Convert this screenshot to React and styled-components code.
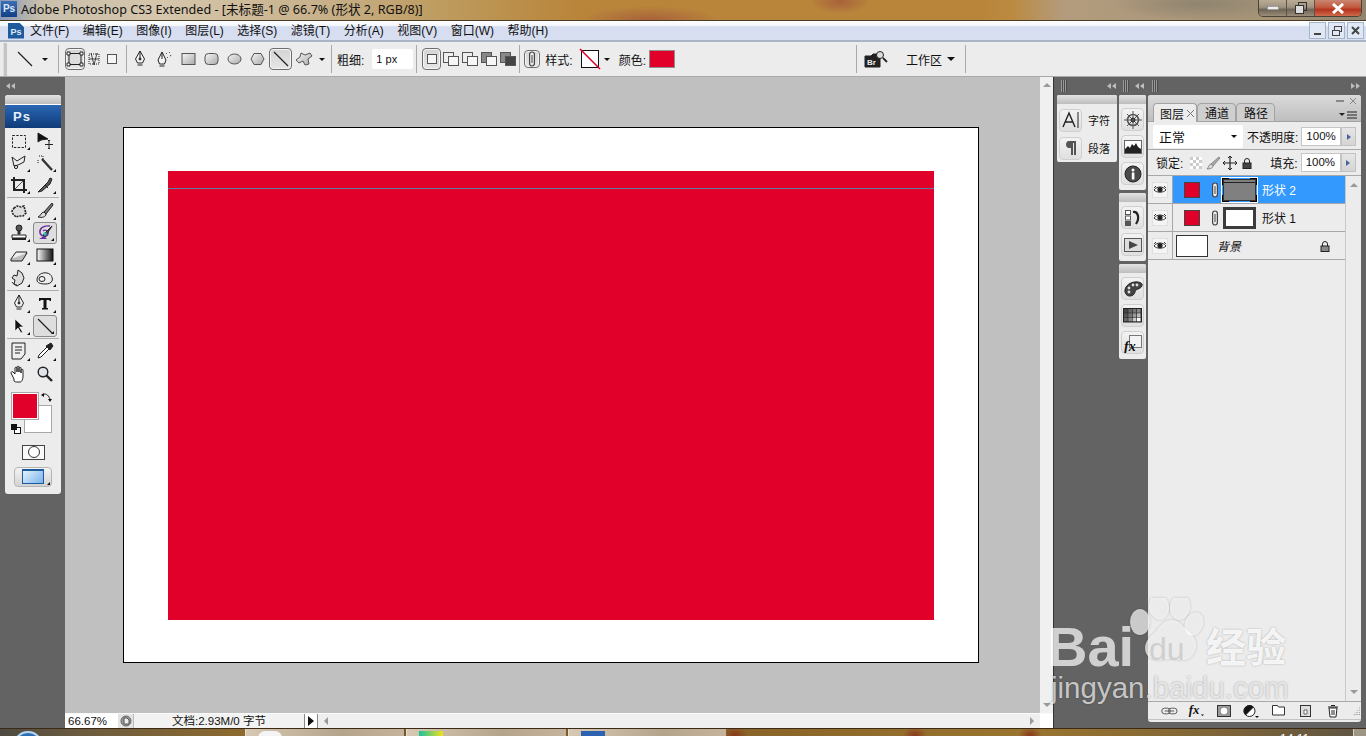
import React from 'react'
import styled, { createGlobalStyle } from 'styled-components'

const uiFont = `"Liberation Sans", "Noto Sans CJK SC", sans-serif`

const GlobalStyle = createGlobalStyle`
  html, body { margin: 0; padding: 0; background: #636363; overflow: hidden; }
  * { box-sizing: border-box; }
`

const Window = styled.div`
  position: relative;
  display: flex;
  flex-direction: column;
  width: 1366px;
  height: 736px;
  overflow: hidden;
  font-family: ${uiFont};
  font-size: 12px;
  color: #111;
`

/* title bar */
const TitleBar = styled.div`
  display: flex;
  align-items: flex-start;
  height: 21px;
  flex: none;
  border-bottom: 1px solid #4a3a26;
  background:
    radial-gradient(ellipse 70px 14px at 650px 20px, #a8623a 0%, transparent 100%),
    radial-gradient(ellipse 30px 12px at 840px 2px, #a8623a 0%, transparent 100%),
    radial-gradient(ellipse 90px 16px at 1200px 4px, #8f8470 0%, transparent 100%),
    linear-gradient(90deg, #8a99b4 0%, #c9c0ac 3%, #d6c6ac 12%, #c7b089 24%, #bd9a5c 33%, #b9853b 42%, #b9853b 72%, #bb8a40 74%, #b39c7e 78%, #a69478 92%, #8f8570 100%);
`

const TitleLogo = styled.div`
  width: 16px;
  height: 16px;
  margin: 1px 0 0 1px;
  background: linear-gradient(#3c6fb8, #123f86);
  color: #dce8fa;
  font: bold 10px/16px "Liberation Sans", sans-serif;
  text-align: center;
`

const TitleText = styled.div`
  margin: 1px 0 0 4px;
  font: 12.6px/18px "Noto Sans", "Noto Sans CJK SC", sans-serif;
  color: #111;
  white-space: nowrap;
`

const WinControls = styled.div`
  display: flex;
  margin-left: auto;
  margin-right: 4px;
  height: 17px;
  border: 1px solid #4d4335;
  border-top: none;
  border-radius: 0 0 5px 5px;
  overflow: hidden;
`

const WinBtn = styled.div`
  display: flex;
  align-items: center;
  justify-content: center;
  width: ${p => p.$w}px;
  height: 100%;
  border-right: 1px solid #5d5345;
  background: ${p => p.$close
    ? 'linear-gradient(#c98672 0%, #c25a3f 45%, #b5341d 60%, #cf6a4c 100%)'
    : 'linear-gradient(#b9ab94 0%, #a09281 45%, #6f6455 60%, #9a8c78 100%)'};
  &:last-child { border-right: none; }
`

/* menu bar */
const MenuBar = styled.div`
  display: flex;
  align-items: center;
  height: 21px;
  flex: none;
  padding-left: 8px;
  border-bottom: 2px solid #a9b4c4;
  background: linear-gradient(#ffffff 0%, #f2f5fb 25%, #d6ddf0 30%, #d8dff1 100%);
`

const MenuLogo = styled.div`
  width: 16px;
  height: 16px;
  margin-right: 6px;
  background: #1f5a9c;
  color: #dfe9f8;
  font: bold 9px/18px "Liberation Sans", sans-serif;
  text-align: center;
  clip-path: polygon(0 0, 70% 0, 100% 30%, 100% 100%, 0 100%);
`

const MenuItems = styled.div`
  display: flex;
  gap: 13.5px;
`

const MenuItem = styled.span`
  font-size: 12px;
  line-height: 16px;
  white-space: nowrap;
`

const DocControls = styled.div`
  display: flex;
  gap: 2px;
  margin: 0 2px 0 auto;
`

const DocBtn = styled.div`
  display: flex;
  align-items: center;
  justify-content: center;
  width: 17px;
  height: 17px;
  border: 1px solid #a6b6c9;
  background: #dfe8f4;
`

/* options bar */
const OptionsBar = styled.div`
  display: flex;
  align-items: center;
  height: 35px;
  flex: none;
  background: #ececec;
  border-bottom: 1px solid #a8a8a8;
`

const Grip = styled.div`
  width: 4px;
  height: 33px;
  margin: 0 6px 0 3px;
  background: #c4c4c4;
  border-left: 1px solid #dedede;
`

const Sep = styled.div`
  width: 1px;
  height: 28px;
  flex: none;
  margin: 0 ${p => p.$r ?? 4}px 0 ${p => p.$l ?? 4}px;
  background: #a9a9a9;
`

const Slot = styled.div`
  display: flex;
  align-items: center;
  justify-content: center;
  flex: none;
  width: ${p => p.$w}px;
  height: ${p => p.$h ?? 22}px;
  margin-left: ${p => p.$ml ?? 0}px;
  ${p => p.$on && `
    border: 1px solid #6e6e6e;
    border-radius: 4px;
    background: linear-gradient(#d4d4d4, #e6e6e6);
    box-shadow: inset 0 0 0 1px #f4f4f4;
  `}
`

const Caret = styled.div`
  flex: none;
  width: 0;
  height: 0;
  margin-left: ${p => p.$ml ?? 0}px;
  border-left: ${p => p.$s ?? 3}px solid transparent;
  border-right: ${p => p.$s ?? 3}px solid transparent;
  border-top: ${p => p.$s ?? 3}px solid #111;
`

const OptLabel = styled.span`
  flex: none;
  margin-left: ${p => p.$ml ?? 0}px;
  font-size: 12px;
  white-space: nowrap;
`

const PxInput = styled.div`
  flex: none;
  width: 41px;
  height: 20px;
  margin-left: 8px;
  padding-left: 4px;
  background: #fff;
  border-radius: 2px;
  font: 11px/20px "Liberation Sans", sans-serif;
`

const ColorChip = styled.div`
  flex: none;
  width: 26px;
  height: 18px;
  margin-left: 3px;
  background: #e1002a;
  border: 1px solid #8f8f8f;
`

/* workspace */
const Workspace = styled.div`
  display: flex;
  flex: 1;
  min-height: 0;
`

const ToolDock = styled.div`
  flex: none;
  width: 65px;
  padding-left: 5px;
  background: #636363;
`

const DockHead = styled.div`
  display: flex;
  align-items: center;
  height: 18px;
  padding-left: 1px;
`

const ToolPanel = styled.div`
  width: 56px;
  height: 399px;
  background: #ececec;
  border-radius: 3px;
  overflow: hidden;
`

const PanelCap = styled.div`
  flex: none;
  align-self: stretch;
  height: 9px;
  background: linear-gradient(#e3e3e3, #bdbdbd);
`

const PsBadge = styled.div`
  height: 24px;
  padding-left: 8px;
  border-top: 1px solid #fff;
  background: linear-gradient(#2a66b4, #0f3b78);
  color: #e8f0fb;
  font: bold 13px/23px "Liberation Sans", sans-serif;
  letter-spacing: 1px;
`

const ToolGrid = styled.div`
  display: grid;
  grid-template-columns: 26px 26px;
  grid-auto-rows: 22.25px;
  padding: 1.5px 0 0 1px;
`

const Tool = styled.div`
  position: relative;
  display: flex;
  align-items: center;
  justify-content: center;
  ${p => p.$on && `
    margin: 0 1px;
    border: 1px solid #8a8a8a;
    border-radius: 3px;
    background: #dedede;
  `}
  ${p => p.$more && `
    &::after {
      content: '';
      position: absolute;
      right: 2px;
      bottom: 2px;
      border-left: 3px solid transparent;
      border-bottom: 3px solid #111;
    }
  `}
`

const ToolDivider = styled.div`
  height: 1px;
  margin: 1px 2px 0;
  background: #adadad;
`

const ColorWell = styled.div`
  position: relative;
  height: 56px;
  margin: 8px 0 0 7px;
`

const FgSwatch = styled.div`
  position: absolute;
  left: 0;
  top: 0;
  z-index: 1;
  width: 26px;
  height: 26px;
  background: #e1002a;
  border: 1px solid #fff;
  outline: 1px solid #a8a8a8;
`

const BgSwatch = styled.div`
  position: absolute;
  left: 12px;
  top: 12px;
  width: 28px;
  height: 28px;
  background: #fff;
  border: 1px solid #a8a8a8;
`

const WellIcon = styled.div`
  position: absolute;
  left: ${p => p.$x}px;
  top: ${p => p.$y}px;
  line-height: 0;
`

const MaskBtn = styled.div`
  display: flex;
  align-items: center;
  justify-content: center;
  width: 23px;
  height: 15px;
  margin: -4px 0 0 17px;
  background: #fafafa;
  border: 1px solid #444;
`

const ScreenBtn = styled.div`
  position: relative;
  display: flex;
  align-items: center;
  justify-content: center;
  width: 38px;
  height: 20px;
  margin: 7px 0 0 9px;
  border: 1px solid #b5b5b5;
  border-radius: 4px;
  background: linear-gradient(#f4f4f4, #d2d2d2);
  &::after {
    content: '';
    position: absolute;
    right: 1px;
    bottom: 1px;
    border-left: 3px solid transparent;
    border-bottom: 3px solid #111;
  }
`

const ScreenIcon = styled.div`
  width: 22px;
  height: 15px;
  border: 1px solid #1c5a9e;
  border-top-width: 2px;
  background: linear-gradient(135deg, #e4f1fd, #79b3ea);
`

/* canvas */
const CanvasColumn = styled.div`
  display: flex;
  flex-direction: column;
  flex: none;
  width: 988px;
`

const CanvasRow = styled.div`
  display: flex;
  flex: 1;
  min-height: 0;
`

const Canvas = styled.div`
  flex: 1;
  padding: 50px 0 0 58px;
  background: #c0c0c0;
`

const Doc = styled.div`
  width: 856px;
  height: 536px;
  padding: 43px 44px;
  background: #fff;
  border: 1px solid #000;
`

const RedShape = styled.div`
  height: 449px;
  padding-top: 17px;
  background: #e1002a;
`

const PathLine = styled.div`
  height: 1px;
  background: #5a7ba5;
`

const VScroll = styled.div`
  display: flex;
  flex-direction: column;
  align-items: center;
  justify-content: space-between;
  flex: none;
  width: 13px;
  padding: 6px 0;
  background: #f0f0f0;
`

const ScrollArrow = styled.div`
  width: 0;
  height: 0;
  border-left: 4px solid transparent;
  border-right: 4px solid transparent;
  ${p => p.$up ? 'border-bottom: 4px solid #9a9a9a;' : 'border-top: 4px solid #9a9a9a;'}
`

const StatusBar = styled.div`
  display: flex;
  align-items: stretch;
  flex: none;
  height: 15px;
  background: #efefef;
  border-top: 1px solid #fafafa;
`

const Zoom = styled.div`
  width: 53px;
  padding-left: 3px;
  background: #fff;
  font: 11.5px/15px "Liberation Sans", sans-serif;
`

const StatusIcon = styled.div`
  display: flex;
  align-items: center;
  justify-content: center;
  width: 16px;
  background: #e4e4e4;
  border-right: 1px solid #bbb;
`

const DocInfo = styled.div`
  width: 170px;
  text-align: center;
  font-size: 11.5px;
  line-height: 15px;
  background: #f2f2f2;
`

const StatusArrow = styled.div`
  display: flex;
  align-items: center;
  justify-content: center;
  width: 14px;
  background: #fff;
  border-left: 1px solid #888;
  border-right: 1px solid #888;
  &::before {
    content: '';
    border-top: 5px solid transparent;
    border-bottom: 5px solid transparent;
    border-left: 6px solid #111;
  }
`

const HScroll = styled.div`
  display: flex;
  align-items: center;
  justify-content: space-between;
  flex: 1;
  padding: 0 6px;
`

const HArrow = styled.div`
  width: 0;
  height: 0;
  border-top: 4px solid transparent;
  border-bottom: 4px solid transparent;
  ${p => p.$left ? 'border-right: 4px solid #9a9a9a;' : 'border-left: 4px solid #9a9a9a;'}
`

const Corner = styled.div`
  width: 13px;
  background: #fff;
`

/* right dock */
const RightDock = styled.div`
  flex: 1;
  display: flex;
  flex-direction: column;
  background: #636363;
  border-left: 1px solid #333;
`

const RightHead = styled.div`
  display: flex;
  align-items: center;
  height: 18px;
  flex: none;
  padding-left: 4px;
`

const GripLines = styled.div`
  flex: none;
  width: 6px;
  height: 12px;
  margin-left: ${p => p.$ml ?? 0}px;
  background: repeating-linear-gradient(90deg, #999 0 1px, #4c4c4c 1px 2px);
`

const Rewind = styled.div`
  display: flex;
  margin-left: ${p => p.$ml ?? 0}px;
  flex: none;
  &::before, &::after {
    content: '';
    border-top: 3.5px solid transparent;
    border-bottom: 3.5px solid transparent;
    ${p => p.$right ? 'border-left: 4px solid #bdbdbd;' : 'border-right: 4px solid #bdbdbd;'}
    margin-right: 1px;
  }
`

const RightBody = styled.div`
  display: flex;
  flex: 1;
  min-height: 0;
  padding: 0 5px 6px 3px;
`

const CharPanel = styled.div`
  flex: none;
  width: 60px;
  height: 67px;
  background: #ececec;
  border-radius: 2px;
  overflow: hidden;
`

const CharRows = styled.div`
  padding-top: 2px;
`

const CharRow = styled.div`
  display: flex;
  align-items: center;
  gap: 6px;
  height: 28px;
  padding-left: 2px;
  font-size: 11px;
`

const IconButton = styled.div`
  display: flex;
  align-items: center;
  justify-content: center;
  flex: none;
  width: 23px;
  height: 23px;
  border: 1px solid #cfcfcf;
  border-radius: 4px;
  background: linear-gradient(#f3f3f3, #dfdfdf);
`

const IconCol = styled.div`
  display: flex;
  flex-direction: column;
  gap: 3px;
  flex: none;
  width: 27px;
  margin-left: 2px;
`

const IconGroup = styled.div`
  display: flex;
  flex-direction: column;
  align-items: center;
  gap: 4px;
  padding-bottom: 5px;
  background: #ececec;
  border-radius: 2px;
  overflow: hidden;
`

const LayersPanel = styled.div`
  display: flex;
  flex-direction: column;
  flex: none;
  width: 213px;
  height: 627px;
  margin-left: 2px;
  background: #ececec;
  border-radius: 3px;
  overflow: hidden;
`

const TabStrip = styled.div`
  position: relative;
  display: flex;
  align-items: flex-end;
  height: 27px;
  flex: none;
  padding-left: 5px;
  background: linear-gradient(#dadada, #bebebe);
  border-bottom: 1px solid #a3a3a3;
`

const Tab = styled.div`
  display: flex;
  align-items: center;
  gap: 3px;
  height: 19px;
  margin-bottom: -1px;
  padding: 0 ${p => p.$on ? 2 : 6}px 0 ${p => p.$on ? 6 : 7}px;
  border: 1px solid #a3a3a3;
  border-bottom: ${p => p.$on ? 'none' : '1px solid #a3a3a3'};
  border-radius: 4px 4px 0 0;
  background: ${p => p.$on ? '#ececec' : '#cfcfcf'};
  font-size: 12px;
`

const PanelMenu = styled.div`
  position: absolute;
  right: 2px;
  bottom: 1px;
  line-height: 0;
`

const PanelWinBtns = styled.div`
  position: absolute;
  right: 4px;
  top: 2px;
  display: flex;
  gap: 5px;
  align-items: center;
  line-height: 0;
`

const BlendRow = styled.div`
  display: flex;
  align-items: center;
  height: 28px;
  flex: none;
  padding: 2px 0 0 5px;
  border-bottom: 1px solid #a8a8a8;
`

const BlendSelect = styled.div`
  display: flex;
  align-items: center;
  justify-content: space-between;
  flex: none;
  width: 90px;
  height: 23px;
  padding: 0 6px;
  background: #fff;
  border-radius: 2px;
  font-size: 13px;
`

const PctInput = styled.div`
  flex: none;
  width: 40px;
  height: 19px;
  margin-left: 3px;
  padding-left: 4px;
  background: #fff;
  border: 1px solid #c6c6c6;
  font: 11.5px/17px "Liberation Sans", sans-serif;
`

const StepBtn = styled.div`
  display: flex;
  align-items: center;
  justify-content: center;
  flex: none;
  width: 15px;
  height: 19px;
  background: linear-gradient(#e6e6e6, #d4d4d4);
  border: 1px solid #c2c2c2;
  &::before {
    content: '';
    border-top: 3px solid transparent;
    border-bottom: 3px solid transparent;
    border-left: 4px solid #46659a;
  }
`

const LockRow = styled.div`
  display: flex;
  align-items: center;
  height: 26px;
  flex: none;
  padding-left: 8px;
  border-bottom: 1px solid #a8a8a8;
`

const LockIcon = styled.div`
  display: flex;
  justify-content: center;
  flex: none;
  width: 17px;
  margin-left: ${p => p.$ml ?? 0}px;
  line-height: 0;
`

const ListArea = styled.div`
  display: flex;
  flex: 1;
  min-height: 0;
`

const LayerList = styled.div`
  flex: 1;
  border-right: 1px solid #c8c8c8;
`

const LayerRow = styled.div`
  display: flex;
  align-items: stretch;
  height: 28px;
  border-bottom: 1px solid #a8a8a8;
`

const EyeCell = styled.div`
  display: flex;
  align-items: center;
  justify-content: center;
  flex: none;
  width: 25px;
  border-right: 1px solid #a8a8a8;
`

const LayerBody = styled.div`
  display: flex;
  align-items: center;
  flex: 1;
  padding-left: ${p => p.$pl ?? 11}px;
  background: ${p => p.$on ? '#3399ff' : 'transparent'};
  color: ${p => p.$on ? '#fff' : '#111'};
`

const ColorThumb = styled.div`
  flex: none;
  width: 16px;
  height: 16px;
  background: #e1002a;
  border: 1px solid #444;
`

const LinkSlot = styled.div`
  display: flex;
  justify-content: center;
  flex: none;
  width: 9px;
  margin-left: 10px;
  line-height: 0;
`

const ShapeThumb = styled.div`
  position: relative;
  flex: none;
  width: 33px;
  height: 22px;
  margin-left: 4px;
  background: ${p => p.$grey ? '#808080' : '#fff'};
  border: ${p => p.$grey ? '1px solid #333' : '3px solid #3c3c3c'};
  &::before {
    content: '';
    display: ${p => p.$grey ? 'block' : 'none'};
    height: 1px;
    margin-top: 2px;
    background: #222;
  }
  ${p => p.$grey && `
    &::after {
      content: '';
      position: absolute;
      inset: -3px;
      border: 1px solid #fff;
      background:
        linear-gradient(#000, #000) 0 0 / 7px 1px no-repeat,
        linear-gradient(#000, #000) 0 0 / 1px 7px no-repeat,
        linear-gradient(#000, #000) 100% 0 / 7px 1px no-repeat,
        linear-gradient(#000, #000) 100% 0 / 1px 7px no-repeat,
        linear-gradient(#000, #000) 0 100% / 7px 1px no-repeat,
        linear-gradient(#000, #000) 0 100% / 1px 7px no-repeat,
        linear-gradient(#000, #000) 100% 100% / 7px 1px no-repeat,
        linear-gradient(#000, #000) 100% 100% / 1px 7px no-repeat;
    }
  `}
`

const BackThumb = styled.div`
  flex: none;
  width: 32px;
  height: 22px;
  background: #fff;
  border: 1px solid #333;
`

const LayerName = styled.span`
  margin-left: ${p => p.$ml ?? 6}px;
  font-size: 12px;
  font-style: ${p => p.$italic ? 'italic' : 'normal'};
`

const LayerLock = styled.div`
  margin: 0 14px 0 auto;
  line-height: 0;
`

const ListScroll = styled.div`
  display: flex;
  flex-direction: column;
  align-items: center;
  justify-content: space-between;
  flex: none;
  width: 15px;
  padding: 7px 0;
`

const PanelFooter = styled.div`
  display: flex;
  align-items: center;
  height: 18px;
  flex: none;
  border-top: 1px solid #a8a8a8;
  padding-left: 13px;
`

const FootIcon = styled.div`
  display: flex;
  justify-content: center;
  flex: none;
  width: 17px;
  margin-right: 10.3px;
  line-height: 0;
`

const PanelBase = styled.div`
  height: 3px;
  flex: none;
  border-top: 1px solid #c4c4c4;
`

/* task bar */
const TaskBar = styled.div`
  position: relative;
  display: flex;
  height: 8px;
  flex: none;
  overflow: hidden;
  padding-left: 245px;
  gap: 2px;
  border-top: 1px solid #3d2a16;
  background:
    radial-gradient(ellipse 12px 8px at 735px 6px, #8a3a1c, transparent),
    radial-gradient(ellipse 12px 8px at 915px 6px, #8a3a1c, transparent),
    radial-gradient(ellipse 12px 8px at 1030px 6px, #8a3a1c, transparent),
    linear-gradient(90deg, #4d4a42 0, #6c5b3f 6%, #8d6a2e 18%, #75552c 30%, #8a6428 55%, #9a7530 75%, #7c6338 90%, #5c5444 100%);
`

const Orb = styled.div`
  position: absolute;
  left: 13px;
  top: 2px;
  width: 30px;
  height: 30px;
  border-radius: 50%;
  border: 2px solid #b8d5ef;
  background: #2c6fb5;
`

const TaskButton = styled.div`
  display: flex;
  width: ${p => p.$w}px;
  height: 7px;
  padding-left: 12px;
  background: linear-gradient(90deg, #d6c8b2, #b5a48c 60%, #c5b49b);
  border-left: 1px solid #e6ddcd;
`

const TaskGlyph = styled.div`
  width: 24px;
  height: 7px;
  margin-top: 2px;
  background: ${p => p.$c};
  border-radius: ${p => p.$round ? '12px 12px 0 0' : '0'};
`

const Clock = styled.div`
  position: absolute;
  left: 1280px;
  top: 3px;
  color: #fff;
  font: 12px/14px "Liberation Sans", sans-serif;
`

const TrayEnd = styled.div`
  position: absolute;
  right: 0;
  top: 0;
  width: 13px;
  height: 8px;
  background: #9d9586;
  border-left: 1px solid #d8d2c4;
`

/* baidu watermark, lies over the panels */
const Watermark = styled.div`
  position: absolute;
  left: 1050px;
  top: 598px;
  width: 250px;
  height: 110px;
  color: rgba(255, 255, 255, 0.7);
  pointer-events: none;
`

const WmBai = styled.div`
  position: absolute;
  left: -3px;
  top: 14px;
  font: bold 56px/70px "Liberation Sans", sans-serif;
`

const WmPaw = styled.svg`
  position: absolute;
  left: 78px;
  top: 0;
  filter: drop-shadow(0 0 1px rgba(0, 0, 0, 0.3));
`

const WmDu = styled.div`
  position: absolute;
  left: 99px;
  top: 33px;
  color: #cfcfcf;
  font: 32px/36px "Liberation Sans", sans-serif;
`

const WmJing = styled.div`
  position: absolute;
  left: 156px;
  top: 22px;
  color: rgba(255, 255, 255, 0.9);
  font: bold 40px/50px "Noto Sans CJK SC", sans-serif;
  text-shadow: 0 0 2px rgba(0, 0, 0, 0.3);
  white-space: nowrap;
`

const WmUrl = styled.div`
  position: absolute;
  left: 1px;
  top: 71px;
  font: 29.5px/38px "Liberation Sans", sans-serif;
  text-shadow: 0 0 2px rgba(0, 0, 0, 0.35);
  white-space: nowrap;
`

const HiddenSvg = styled.svg`
  position: absolute;
`

/* drawings */
const S = ({ w = 16, h = 16, v, children }) => (
  <svg width={w} height={h} viewBox={v || `0 0 ${w} ${h}`} fill="none" stroke="#222" strokeWidth="1">{children}</svg>
)

const LineIcon = ({ s = 16 }) => <S w={s} h={s} v="0 0 16 16"><path d="M1 1L15 15" strokeWidth="1.2" /></S>
const Shapes = () => <S w={18} h={16}><rect x="3" y="2.5" width="12" height="11" fill="#ddd" /><path d="M1 1h3v3H1zM14 1h3v3h-3zM1 12h3v3H1zM14 12h3v3h-3z" fill="#fff" /></S>
const PathsIco = () => <S w={16} h={16}><path d="M3 3h10v10H3z" strokeDasharray="1 1" /><path d="M5 2l3 12M11 2L8 14M3 8h10" strokeWidth=".8" /></S>
const FillSq = () => <S w={12} h={12}><rect x="1.5" y="1.5" width="9" height="9" fill="#f5f5f5" stroke="#555" /></S>
const Nib = () => <S w={14} h={18}><path d="M7 1L11.5 9 9.5 13H4.5L2.5 9z" fill="#f3f3f3" /><path d="M7 1v7M4.5 15h5" /><circle cx="7" cy="9" r="1" fill="#222" /></S>
const FreeNib = () => <S w={18} h={18}><path d="M6 2L10 10 8.5 14H3.5L2 10z" fill="#f3f3f3" /><path d="M6 2v7M3.5 16h5" /><path d="M10 3l1 1M13 2l1 1M14 6l2-1M11 7l1 1" strokeDasharray="1 1" /></S>
const grad = 'url(#g1)'
const Rect = () => <S w={15} h={14}><rect x="1" y="1.5" width="13" height="11" fill={grad} stroke="#555" /></S>
const Round = () => <S w={15} h={14}><rect x="1" y="1.5" width="13" height="11" rx="3.5" fill={grad} stroke="#555" /></S>
const Ell = () => <S w={15} h={14}><ellipse cx="7.5" cy="7" rx="6.5" ry="5" fill={grad} stroke="#555" /></S>
const Poly = () => <S w={15} h={14}><path d="M4 1.5h7l3 5.5-3 5.5H4L1 7z" fill={grad} stroke="#555" /></S>
const Blob = () => <S w={20} h={16}><path d="M2 9l4-3 1-4 4 2 5-2 2 3-4 3 1 5-4 1-2-4-4 2z" fill={grad} stroke="#555" /></S>
const Link = () => <S w={8} h={16}><rect x="1.6" y="1" width="4.8" height="14" rx="2.4" fill="#eee" stroke="#444" strokeWidth="1.2" /><rect x="3.5" y="4" width="1" height="8" fill="#444" stroke="none" /></S>
const Br = () => (
  <S w={24} h={18}>
    <path d="M1 6h6l2-2h7v13H1z" fill="#222" />
    <text x="3" y="15" fontFamily="Liberation Sans" fontWeight="bold" fontSize="8" fill="#eee" stroke="none">Br</text>
    <circle cx="16" cy="5" r="3.5" fill="#ddd" />
    <path d="M19 8l4 4" strokeWidth="1.8" />
  </S>
)
const SlashSwatch = () => <S w={22} h={22}><rect x="2.5" y="2.5" width="17" height="17" fill="#fff" stroke="#111" /><path d="M1 1L21 21" stroke="#e1002a" strokeWidth="1.6" /></S>
const ModeBox = ({ a, b }) => (
  <S w={18} h={16}>
    <rect x="1.5" y="1.5" width="10" height="10" fill={a ? '#888' : '#eee'} stroke="#555" />
    <rect x="6.5" y="5.5" width="10" height="9" fill={b ? '#444' : '#f6f6f6'} stroke="#555" />
  </S>
)

const Marquee = () => <S><rect x="1.5" y="2.5" width="13" height="12" strokeDasharray="2.4 1.4" /></S>
const Move = () => <S w={18} h={18}><path d="M2 1v9l3-2 7-1z" fill="#111" /><path d="M13 8v9M9 12.5h8M12 9l1-1 1 1M12 16l1 1 1-1" /></S>
const Lasso = () => <S w={18} h={17}><path d="M2 3l5 4 8-5-1 6-6 3-4 1z" /><circle cx="6" cy="13" r="1.6" /></S>
const Wand = () => <S w={18} h={18}><path d="M3 2h4v3M2 6v3" strokeDasharray="1 1" /><path d="M6 5l10 11" strokeWidth="2.4" stroke="#333" /></S>
const Crop = () => <S w={18} h={18}><path d="M4 1v13h13M1 4h13v13" strokeWidth="2" /><path d="M5 13L13 5" strokeWidth=".8" /></S>
const Slice = () => <S w={18} h={18}><path d="M2 16L12 6l2-4 2 1-2 5-8 7z" fill="#555" /><path d="M9 9l3 3" /></S>
const Patch = () => <S w={18} h={18}><path d="M4 6l3-2 4 1 3-1 1 4 1 3-3 3-4 0-3 1-3-3-1-3z" fill="#ddd" strokeDasharray="2 1" strokeWidth="1.6" /></S>
const Brush = () => <S w={18} h={18}><path d="M16 1L8 10l2 2 7-9z" fill="#777" /><path d="M8 10c-3 0-3 4-6 5 4 1 8 0 8-3z" fill="#ddd" /></S>
const Stamp = () => <S w={18} h={18}><circle cx="9" cy="4" r="3" fill="#555" /><path d="M8 7h2v3H8z" fill="#555" /><path d="M2 11h14v3H2z" fill="#fff" /><path d="M2 15h14" strokeWidth="2" /></S>
const History = () => <S w={18} h={18}><path d="M14 2C7 1 3 5 4 9s7 4 8 1-3-5-5-3" stroke="#6a2fa0" strokeWidth="1.4" /><path d="M16 2L7 11l2 2z" fill="#555" /><circle cx="9" cy="10" r="1.8" fill="#3bb7b7" stroke="none" /><path d="M3 15h8l-3-3z" fill="#6a2fa0" stroke="none" /></S>
const Eraser = () => <S w={18} h={14}><path d="M1 11l5-7h11l-5 7z" fill="#eee" /><path d="M1 11v2h11l5-8" fill="#bbb" /></S>
const Gradient = () => <S w={18} h={14}><rect x="1" y="1" width="16" height="12" fill="url(#g2)" stroke="#111" /></S>
const Smudge = () => <S w={18} h={18}><path d="M8 1l4 3 2 5-2 5-5 3-3-2 1-4-3-2 2-3 3 1z" fill="#ddd" /><path d="M2 13c1 2 3 3 5 3" /></S>
const Dodge = () => <S w={20} h={16}><path d="M2 10c0-5 5-8 10-7s6 6 5 8-3 3-7 3-8-1-8-4z" fill="#eee" /><ellipse cx="7" cy="9" rx="3" ry="2.5" /></S>
const TypeT = () => <S w={16} h={16}><path d="M2 3h12v3h-1l-1-1H9.5v8H11v1.5H5V13h1.5V5H4L3 6H2z" fill="#111" stroke="none" /></S>
const PathSel = () => <S w={14} h={18}><path d="M3 2v12l3-3 3 5 1.5-1-3-5h4z" fill="#111" stroke="#fff" strokeWidth=".6" /></S>
const Note = () => <S w={18} h={18}><path d="M2 1h13v11l-4 5H2z" fill="#eee" /><path d="M5 5h7M5 8h7M5 11h5" /></S>
const Dropper = () => <S w={18} h={18}><path d="M11 5L3 13l-1 3 3-1 8-8" fill="#fff" /><path d="M10 4l4 4 3-4-2-3z" fill="#222" /></S>
const Hand = () => <S w={18} h={18}><path d="M4 14L1 8c0-1 1-2 2-1l2 2V3c0-1 2-1 2 0v4-5c0-1 2-1 2 0v5-4c0-1 2-1 2 0v5-3c0-1 2-1 2 0v6c0 3-1 6-3 6H7c-1 0-2 0-3-1z" fill="#fff" /></S>
const Loupe = () => <S w={18} h={18}><circle cx="7" cy="7" r="4.8" fill="#dfe4ea" strokeWidth="1.4" /><path d="M10.5 10.5L16 16" strokeWidth="2.4" /></S>
const Swap = () => <S w={12} h={12}><path d="M2 4c3-2 6-1 8 4" /><path d="M1 4l3-2v4zM10 11L8 8h4z" fill="#111" stroke="none" /></S>
const Defaults = () => <S w={12} h={12}><rect x="4.5" y="4.5" width="6" height="6" fill="#fff" stroke="#111" /><rect x="1" y="1" width="6" height="6" fill="#111" stroke="none" /></S>

const GlyphA = () => <S w={20} h={18}><path d="M2 16L8 2l6 14M4.5 11h7" strokeWidth="1.4" /><path d="M17 1v16" /></S>
const Pilcrow = () => <S w={14} h={16}><path d="M5 1h7v14h-2V3H9v12H7V8H5C1 8 1 1 5 1z" fill="#555" stroke="none" /></S>
const Wheel = () => <S w={18} h={18}><circle cx="9" cy="9" r="5.5" strokeWidth="1.6" stroke="#555" /><path d="M9 0v18M0 9h18M3 3l12 12M15 3L3 15" stroke="#555" /><circle cx="9" cy="9" r="2" fill="#555" /></S>
const Histo = () => <S w={18} h={14}><rect x=".5" y=".5" width="17" height="13" fill="#fff" stroke="#666" /><path d="M1 13V9l3-3 2 2 2-4 2 2 2-3 2 4 3 2v4z" fill="#222" stroke="none" /></S>
const Info = () => <S w={18} h={18}><circle cx="9" cy="9" r="8" fill="#4a4a4a" stroke="#222" /><rect x="7.8" y="7.5" width="2.6" height="7" fill="#fff" stroke="none" /><circle cx="9" cy="5" r="1.5" fill="#fff" stroke="none" /></S>
const HistoryPal = () => <S w={18} h={18}><rect x="1.5" y="1.5" width="5" height="4" fill="#fff" stroke="#555" /><rect x="1.5" y="7" width="5" height="4" fill="#fff" stroke="#555" /><rect x="1.5" y="12.5" width="5" height="4" fill="#555" stroke="#555" /><path d="M9 3c5-1 7 6 3 12" strokeWidth="2.2" /></S>
const Action = () => <S w={18} h={14}><rect x=".5" y=".5" width="17" height="13" fill="#ddd" stroke="#555" /><path d="M5 3l9 4-9 4z" fill="#444" stroke="none" /></S>
const Palette = () => <S w={20} h={18}><path d="M2 12C1 6 8 1 15 2s4 6 0 7-2 4-5 6-7 1-8-3z" fill="#444" /><circle cx="6" cy="12" r="1.4" fill="#ddd" stroke="none" /><circle cx="10" cy="5" r="1.4" fill="#ddd" stroke="none" /><circle cx="14" cy="5" r="1.4" fill="#ddd" stroke="none" /><circle cx="6" cy="8" r="1.4" fill="#ddd" stroke="none" /></S>
const swatchShades = ['#444', '#666', '#777', '#888', '#555', '#777', '#999', '#bbb', '#666', '#888', '#ccc', '#fff']
const Swatches = () => (
  <S w={19} h={15}>
    <rect x="0" y="0" width="19" height="14.5" fill="#222" stroke="none" />
    {swatchShades.map((c, i) => (
      <rect key={i} x={1 + (i % 4) * 4.3} y={1 + Math.floor(i / 4) * 4.3} width="3.7" height="3.7" fill={c} stroke="none" />
    ))}
  </S>
)
const Fx = () => <S w={20} h={20}><rect x="6.5" y="2.5" width="12" height="12" fill="#f3f3f3" stroke="#777" /><text x="1" y="18" fontFamily="Liberation Serif" fontStyle="italic" fontWeight="bold" fontSize="14" fill="#111" stroke="none">fx</text></S>

const Eye = () => <S w={16} h={16}><rect x=".5" y=".5" width="15" height="15" fill="#f4f4f4" stroke="#e0e0e0" /><path d="M2 8c3-4 9-4 12 0-3 3-9 3-12 0z" fill="#fff" stroke="#333" /><circle cx="8" cy="7.5" r="2.6" fill="#222" stroke="none" /><path d="M2 6l2-2M14 6l-2-2" stroke="#333" /></S>
const Lock = ({ c = '#444' }) => <S w={12} h={12}><path d="M3.5 6V4a2.5 2.5 0 015 0v2" /><rect x="2" y="6" width="8" height="5.5" fill={c} stroke="#222" /></S>
const Checker = () => <S w={12} h={12}><rect width="12" height="12" fill="#fff" stroke="none" /><path d="M0 0h3v3H0zM6 0h3v3H6zM3 3h3v3H3zM9 3h3v3H9zM0 6h3v3H0zM6 6h3v3H6zM3 9h3v3H3zM9 9h3v3H9z" fill="#ccc" stroke="none" /></S>
const PanelBrush = () => <S w={14} h={14}><path d="M13 1L5 8l2 2 7-8z" fill="#aaa" stroke="#888" /><path d="M5 8c-2 0-2 3-4 5 3 0 6-1 6-3z" fill="#ddd" stroke="#888" /></S>
const Cross = () => <S w={14} h={14}><path d="M7 0v14M0 7h14" strokeWidth="1.2" /><path d="M5 2l2-2 2 2M5 12l2 2 2-2M2 5L0 7l2 2M12 5l2 2-2 2" /></S>
const Chain = () => <S w={18} h={8}><rect x=".8" y="1" width="9" height="6" rx="3" stroke="#555" /><rect x="8" y="1" width="9" height="6" rx="3" stroke="#555" /><path d="M4 4h10" stroke="#555" /></S>
const FootFx = () => <S w={20} h={14}><text x="1" y="11" fontFamily="Liberation Serif" fontStyle="italic" fontWeight="bold" fontSize="15" fill="#111" stroke="none">fx</text><path d="M15 11l4 0-2 2z" fill="#111" stroke="none" /></S>
const FootMask = () => <S w={14} h={12}><rect x=".5" y=".5" width="13" height="11" fill="#999" stroke="#333" /><circle cx="7" cy="6" r="3.2" fill="#fff" stroke="none" /></S>
const FootAdj = () => <S w={16} h={14}><circle cx="6.5" cy="7" r="5.5" fill="#fff" /><path d="M2.6 10.9A5.5 5.5 0 0110.4 3.1z" fill="#111" /><path d="M12 12h4l-2 2z" fill="#111" stroke="none" /></S>
const Folder = () => <S w={13} h={11}><path d="M.5 2V.5h5l1 1.5h6v8H.5z" fill="#fff" stroke="#333" /></S>
const NewLayer = () => <S w={11} h={12}><rect x=".5" y=".5" width="10" height="11" fill="#ddd" stroke="#333" /><path d="M4 5h3v4H4z" fill="#fff" stroke="#333" strokeWidth=".7" /></S>
const Trash = () => <S w={12} h={14}><path d="M2 4h8l-1 9H3z" fill="#fff" /><path d="M1 3h10M4 1.5h4M5 6v5M7 6v5" /></S>
const ResizeDots = () => (
  <S w={10} h={10}><path d="M8 1h1v1H8zM6 3.5h1v1H6zM8 3.5h1v1H8zM4 6h1v1H4zM6 6h1v1H6zM8 6h1v1H8zM2 8.5h1v1H2zM4 8.5h1v1H4zM6 8.5h1v1H6zM8 8.5h1v1H8z" fill="#888" stroke="none" /></S>
)
const MenuLines = () => <S w={20} h={9}><path d="M0 2h6L3 5z" fill="#222" stroke="none" /><path d="M8 1h10M8 4h10M8 7h10" strokeWidth="1.2" /></S>

const Defs = () => (
  <HiddenSvg width="0" height="0">
    <defs>
      <linearGradient id="g1" x1="0" y1="0" x2="1" y2="1"><stop offset="0" stopColor="#f6f6f6" /><stop offset="1" stopColor="#a9a9a9" /></linearGradient>
      <linearGradient id="g2" x1="0" y1="0" x2="1" y2="0"><stop offset="0" stopColor="#fff" /><stop offset="1" stopColor="#111" /></linearGradient>
    </defs>
  </HiddenSvg>
)

const menus = ['文件(F)', '编辑(E)', '图像(I)', '图层(L)', '选择(S)', '滤镜(T)', '分析(A)', '视图(V)', '窗口(W)', '帮助(H)']

const toolGroups = [
  [[Marquee, 1], [Move, 0], [Lasso, 1], [Wand, 1], [Crop, 1], [Slice, 1]],
  [[Patch, 1], [Brush, 1], [Stamp, 1], [History, 1, 1], [Eraser, 1], [Gradient, 1], [Smudge, 1], [Dodge, 1]],
  [[Nib, 1], [TypeT, 1], [PathSel, 1], [LineIcon, 1, 1]],
  [[Note, 1], [Dropper, 1], [Hand, 0], [Loupe, 0]],
]

function Options() {
  return (
    <OptionsBar>
      <Grip />
      <Slot $w={23}><LineIcon /></Slot>
      <Caret $ml={6} />
      <Sep $l={10} $r={6} />
      <Slot $w={20} $on><Shapes /></Slot>
      <Slot $w={17}><PathsIco /></Slot>
      <Slot $w={18} $ml={1}><FillSq /></Slot>
      <Sep $l={5} $r={3} />
      <Slot $w={20}><Nib /></Slot>
      <Slot $w={24} $ml={3}><FreeNib /></Slot>
      <Slot $w={23}><Rect /></Slot>
      <Slot $w={23}><Round /></Slot>
      <Slot $w={23}><Ell /></Slot>
      <Slot $w={23}><Poly /></Slot>
      <Slot $w={23} $on><LineIcon /></Slot>
      <Slot $w={23}><Blob /></Slot>
      <Caret $ml={4} />
      <Sep $l={6} $r={5} />
      <OptLabel>粗细:</OptLabel>
      <PxInput>1 px</PxInput>
      <Sep $l={3} $r={5} />
      <Slot $w={19} $on><FillSq /></Slot>
      <Slot $w={19}><ModeBox /></Slot>
      <Slot $w={19}><ModeBox /></Slot>
      <Slot $w={19}><ModeBox a /></Slot>
      <Slot $w={19}><ModeBox a b /></Slot>
      <Sep $l={2} $r={4} />
      <Slot $w={16} $h={18} $on><Link /></Slot>
      <OptLabel $ml={5}>样式:</OptLabel>
      <Slot $w={24} $ml={5}><SlashSwatch /></Slot>
      <Caret $ml={2} />
      <OptLabel $ml={9}>颜色:</OptLabel>
      <ColorChip />
      <Sep $l={181} $r={7} />
      <Slot $w={24}><Br /></Slot>
      <OptLabel $ml={18}>工作区</OptLabel>
      <Caret $ml={5} $s={4.5} />
      <Sep $l={10} />
    </OptionsBar>
  )
}

function Tools() {
  return (
    <ToolDock>
      <DockHead><Rewind /></DockHead>
      <ToolPanel>
        <PanelCap />
        <PsBadge>Ps</PsBadge>
        {toolGroups.map((group, i) => (
          <React.Fragment key={i}>
            <ToolGrid>
              {group.map(([Icon, more, on], j) => (
                <Tool key={j} $more={more} $on={on}><Icon /></Tool>
              ))}
            </ToolGrid>
            {i < 3 && <ToolDivider />}
          </React.Fragment>
        ))}
        <ColorWell>
          <BgSwatch />
          <FgSwatch />
          <WellIcon $x={28} $y={-2}><Swap /></WellIcon>
          <WellIcon $x={-2} $y={30}><Defaults /></WellIcon>
        </ColorWell>
        <MaskBtn><svg width="12" height="12"><circle cx="6" cy="6" r="5.5" fill="#fff" stroke="#333" /></svg></MaskBtn>
        <ScreenBtn><ScreenIcon /></ScreenBtn>
      </ToolPanel>
    </ToolDock>
  )
}

function CanvasArea() {
  return (
    <CanvasColumn>
      <CanvasRow>
        <Canvas>
          <Doc>
            <RedShape><PathLine /></RedShape>
          </Doc>
        </Canvas>
        <VScroll>
          <ScrollArrow $up />
          <ScrollArrow />
        </VScroll>
      </CanvasRow>
      <StatusBar>
        <Zoom>66.67%</Zoom>
        <StatusIcon>
          <svg width="12" height="12"><circle cx="6" cy="6" r="5" fill="#999" stroke="#666" /><path d="M4 3h3l2 2v4H4z" fill="#eee" stroke="#555" /></svg>
        </StatusIcon>
        <DocInfo>文档:2.93M/0 字节</DocInfo>
        <StatusArrow />
        <HScroll>
          <HArrow $left />
          <HArrow />
        </HScroll>
        <Corner />
      </StatusBar>
    </CanvasColumn>
  )
}

function Layers() {
  return (
    <LayersPanel>
      <TabStrip>
        <PanelWinBtns>
          <svg width="8" height="2"><rect width="8" height="2" fill="#888" /></svg>
          <svg width="8" height="8" stroke="#888"><path d="M1 1l6 6M7 1L1 7" /></svg>
        </PanelWinBtns>
        <Tab $on>图层<svg width="7" height="7" stroke="#777"><path d="M0 0l7 7M7 0L0 7" /></svg></Tab>
        <Tab>通道</Tab>
        <Tab>路径</Tab>
        <PanelMenu><MenuLines /></PanelMenu>
      </TabStrip>
      <BlendRow>
        <BlendSelect>正常<Caret $s={3.5} /></BlendSelect>
        <OptLabel $ml={4}>不透明度:</OptLabel>
        <PctInput>100%</PctInput>
        <StepBtn />
      </BlendRow>
      <LockRow>
        <OptLabel>锁定:</OptLabel>
        <LockIcon $ml={4}><Checker /></LockIcon>
        <LockIcon><PanelBrush /></LockIcon>
        <LockIcon><Cross /></LockIcon>
        <LockIcon><Lock /></LockIcon>
        <OptLabel $ml={15}>填充:</OptLabel>
        <PctInput>100%</PctInput>
        <StepBtn />
      </LockRow>
      <ListArea>
        <LayerList>
          <LayerRow>
            <EyeCell><Eye /></EyeCell>
            <LayerBody $on>
              <ColorThumb />
              <LinkSlot><Link /></LinkSlot>
              <ShapeThumb $grey />
              <LayerName>形状 2</LayerName>
            </LayerBody>
          </LayerRow>
          <LayerRow>
            <EyeCell><Eye /></EyeCell>
            <LayerBody>
              <ColorThumb />
              <LinkSlot><Link /></LinkSlot>
              <ShapeThumb />
              <LayerName>形状 1</LayerName>
            </LayerBody>
          </LayerRow>
          <LayerRow>
            <EyeCell><Eye /></EyeCell>
            <LayerBody $pl={3}>
              <BackThumb />
              <LayerName $ml={9} $italic>背景</LayerName>
              <LayerLock><Lock c="#888" /></LayerLock>
            </LayerBody>
          </LayerRow>
        </LayerList>
        <ListScroll>
          <ScrollArrow $up />
          <ScrollArrow />
        </ListScroll>
      </ListArea>
      <PanelFooter>
        <FootIcon><Chain /></FootIcon>
        <FootIcon><FootFx /></FootIcon>
        <FootIcon><FootMask /></FootIcon>
        <FootIcon><FootAdj /></FootIcon>
        <FootIcon><Folder /></FootIcon>
        <FootIcon><NewLayer /></FootIcon>
        <FootIcon><Trash /></FootIcon>
        <ResizeDots />
      </PanelFooter>
      <PanelBase />
    </LayersPanel>
  )
}

function Dock() {
  return (
    <RightDock>
      <RightHead>
        <GripLines $ml={3} />
        <Rewind $ml={40} />
        <GripLines $ml={6} />
        <Rewind $ml={6} />
        <GripLines $ml={7} />
        <Rewind $ml={193} $right />
      </RightHead>
      <RightBody>
        <CharPanel>
          <PanelCap />
          <CharRows>
            <CharRow><IconButton><GlyphA /></IconButton>字符</CharRow>
            <CharRow><IconButton><Pilcrow /></IconButton>段落</CharRow>
          </CharRows>
        </CharPanel>
        <IconCol>
          <IconGroup>
            <PanelCap />
            <IconButton><Wheel /></IconButton>
            <IconButton><Histo /></IconButton>
            <IconButton><Info /></IconButton>
          </IconGroup>
          <IconGroup>
            <PanelCap />
            <IconButton><HistoryPal /></IconButton>
            <IconButton><Action /></IconButton>
          </IconGroup>
          <IconGroup>
            <PanelCap />
            <IconButton><Palette /></IconButton>
            <IconButton><Swatches /></IconButton>
            <IconButton><Fx /></IconButton>
          </IconGroup>
        </IconCol>
        <Layers />
      </RightBody>
    </RightDock>
  )
}

export default function App() {
  return (
    <Window>
      <GlobalStyle />
      <Defs />
      <TitleBar>
        <TitleLogo>Ps</TitleLogo>
        <TitleText>Adobe Photoshop CS3 Extended - [未标题-1 @ 66.7% (形状 2, RGB/8)]</TitleText>
        <WinControls>
          <WinBtn $w={28}><svg width="12" height="4"><rect width="12" height="4" fill="#eee" stroke="#555" /></svg></WinBtn>
          <WinBtn $w={28}><svg width="12" height="12" fill="none" stroke="#333"><rect x="3.5" y=".5" width="8" height="8" /><rect x=".5" y="3.5" width="8" height="8" fill="#ddd" /></svg></WinBtn>
          <WinBtn $w={46} $close><svg width="12" height="11" stroke="#fff" strokeWidth="3"><path d="M1 1l10 9M11 1L1 10" /></svg></WinBtn>
        </WinControls>
      </TitleBar>
      <MenuBar>
        <MenuLogo>Ps</MenuLogo>
        <MenuItems>
          {menus.map(m => <MenuItem key={m}>{m}</MenuItem>)}
        </MenuItems>
        <DocControls>
          <DocBtn><svg width="8" height="8"><rect y="6" width="7" height="2" fill="#444" /></svg></DocBtn>
          <DocBtn><svg width="10" height="10" fill="none" stroke="#444"><rect x="2.5" y=".5" width="7" height="5" /><rect x=".5" y="4.5" width="7" height="5" fill="#dfe8f4" /></svg></DocBtn>
          <DocBtn><svg width="9" height="9" stroke="#444" strokeWidth="2"><path d="M1 1l7 7M8 1L1 8" /></svg></DocBtn>
        </DocControls>
      </MenuBar>
      <Options />
      <Workspace>
        <Tools />
        <CanvasArea />
        <Dock />
      </Workspace>
      <TaskBar>
        <Orb />
        <TaskButton $w={159}><TaskGlyph $c="#f4f4f4" $round /></TaskButton>
        <TaskButton $w={160}><TaskGlyph $c="linear-gradient(90deg,#18c2a0,#f4e11a)" /></TaskButton>
        <TaskButton $w={158}><TaskGlyph $c="#2c62b0" /></TaskButton>
        <Clock>14:11</Clock>
        <TrayEnd />
      </TaskBar>
      <Watermark>
        <WmBai>Bai</WmBai>
        <WmPaw width="76" height="72" viewBox="0 0 76 72" fill="currentColor">
          <ellipse cx="12" cy="24" rx="10" ry="13" />
          <ellipse cx="31" cy="9" rx="10" ry="13" transform="rotate(-8 31 9)" />
          <ellipse cx="52" cy="9" rx="10" ry="13" transform="rotate(8 52 9)" />
          <ellipse cx="66" cy="26" rx="9" ry="12" transform="rotate(20 66 26)" />
          <path d="M44 22c8 0 12 8 18 13 8 7 8 16 2 23-6 7-16 3-22 3s-16 4-22-3c-6-7-2-16 4-21 7-6 10-15 20-15z" />
        </WmPaw>
        <WmDu>du</WmDu>
        <WmJing>经验</WmJing>
        <WmUrl>jingyan.baidu.com</WmUrl>
      </Watermark>
    </Window>
  )
}
